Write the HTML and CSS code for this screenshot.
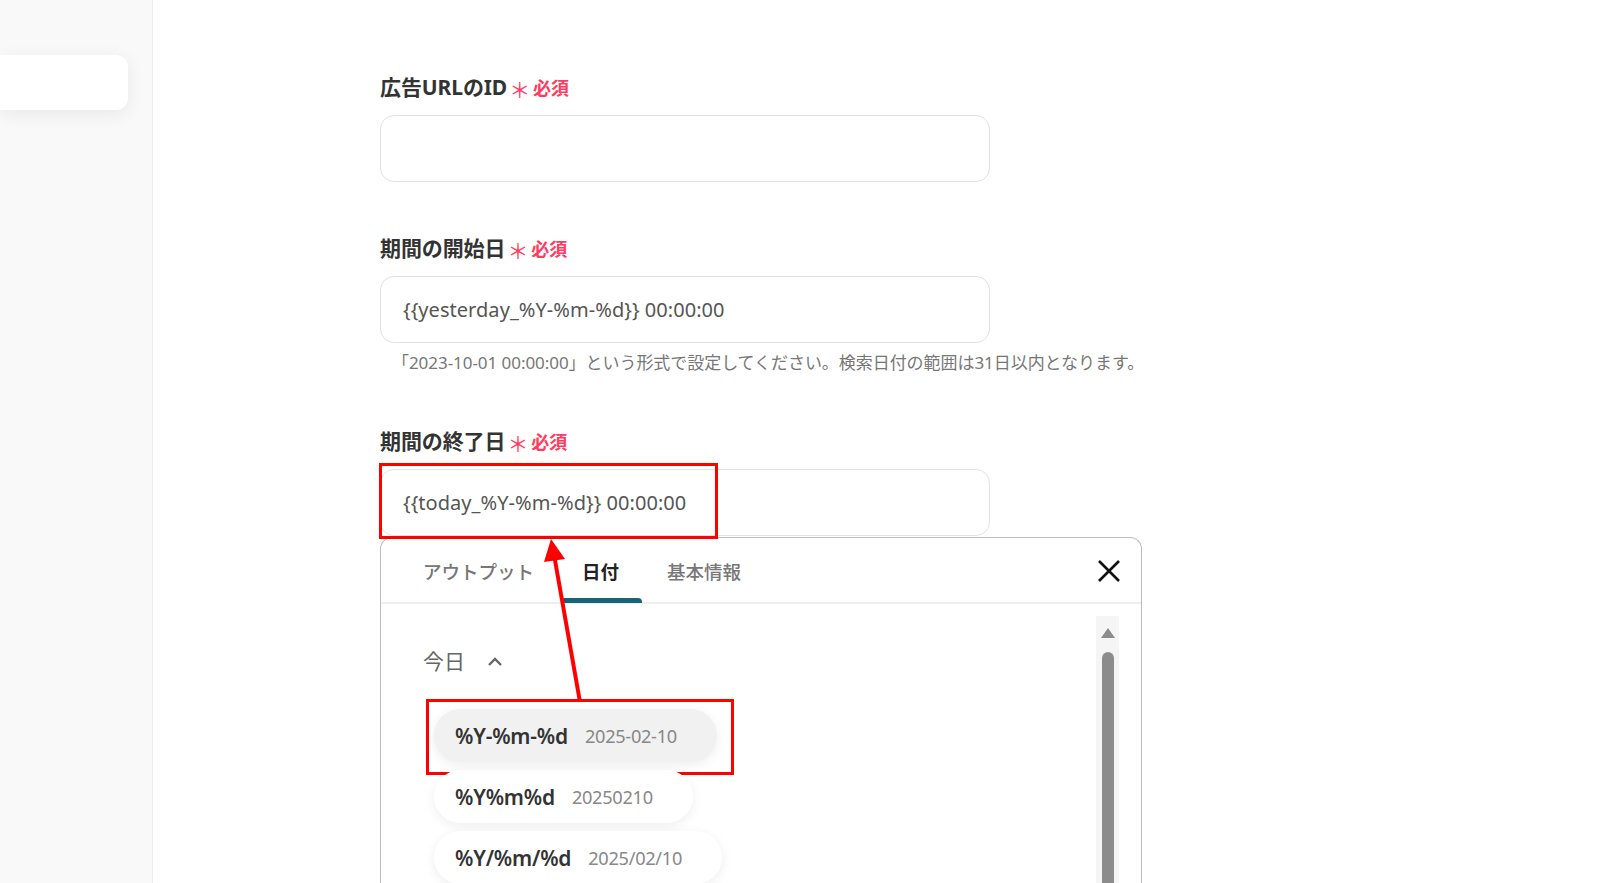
FILE: index.html
```html
<!DOCTYPE html>
<html lang="ja">
<head>
    <meta charset="UTF-8">
    <meta name="viewport" content="width=device-width, initial-scale=1.0">
    <title>期間の設定</title>
    <link rel="stylesheet" href="styles.css">
</head>
<body>
    <div class="app">
        <aside class="sidebar">
            <div class="side-card"></div>
        </aside>

        <main class="main">
            <div class="form">
                <div class="field">
                    <div class="label">広告URLのID<span class="req"><span class="star">＊</span>必須</span></div>
                    <div class="input"></div>
                </div>

                <div class="field">
                    <div class="label">期間の開始日<span class="req"><span class="star">＊</span>必須</span></div>
                    <div class="input">{{yesterday_%Y-%m-%d}} 00:00:00</div>
                    <p class="hint">「2023-10-01 00:00:00」という形式で設定してください。検索日付の範囲は31日以内となります。</p>
                </div>

                <div class="field">
                    <div class="label">期間の終了日<span class="req"><span class="star">＊</span>必須</span></div>
                    <div class="input-wrap">
                        <div class="input">{{today_%Y-%m-%d}} 00:00:00</div>
                        <div class="mark mark-input"></div>
                    </div>

                    <div class="picker">
                        <div class="picker-head">
                            <div class="tabs">
                                <div class="tab">アウトプット</div>
                                <div class="tab active">日付</div>
                                <div class="tab">基本情報</div>
                            </div>
                            <svg class="close" width="24" height="24" viewBox="0 0 24 24">
                                <path d="M2 2 L22 22 M22 2 L2 22" stroke="#111" stroke-width="2.6" fill="none"/>
                            </svg>
                        </div>
                        <div class="picker-body">
                            <div class="list">
                                <div class="group">
                                    今日
                                    <svg width="16" height="12" viewBox="0 0 16 12">
                                        <path d="M2 10 L8 4 L14 10" stroke="#666" stroke-width="2.4" fill="none"/>
                                    </svg>
                                </div>
                                <div class="item selected">
                                    <span class="fmt">%Y-%m-%d</span><span class="val">2025-02-10</span>
                                    <div class="mark mark-item"></div>
                                </div>
                                <div class="item">
                                    <span class="fmt">%Y%m%d</span><span class="val">20250210</span>
                                </div>
                                <div class="item">
                                    <span class="fmt">%Y/%m/%d</span><span class="val">2025/02/10</span>
                                </div>
                            </div>
                            <div class="scroll">
                                <div class="scroll-up"></div>
                                <div class="scroll-thumb"></div>
                            </div>
                        </div>
                    </div>
                </div>
            </div>
        </main>

        <!-- annotation arrow -->
        <svg class="arrow" width="1600" height="883" viewBox="0 0 1600 883">
            <line x1="580" y1="702" x2="554.6" y2="558" stroke="#ff0000" stroke-width="4"/>
            <polygon points="551,539 565,559 544,562" fill="#ff0000"/>
        </svg>
    </div>
</body>
</html>
```

FILE: styles.css
```css
html,
body {
    margin: 0;
    height: 883px;
    overflow: hidden;
    background-color: #ffffff;
    font-family: "Noto Sans", "Noto Sans CJK JP", sans-serif;
    color: #333;
}

.app {
    position: relative;
    display: flex;
    height: 883px;
}

.sidebar {
    width: 153px;
    flex-shrink: 0;
    background-color: #f9f9f9;
    border-right: 1px solid #efefef;
    padding-top: 55px;
    box-sizing: border-box;
}

.side-card {
    width: 128px;
    height: 55px;
    background: #fff;
    border-radius: 0 12px 12px 0;
    box-shadow: 0 4px 18px rgba(0, 0, 0, 0.07);
}

.main {
    flex: 1;
    padding: 73px 0 0 227px;
}

.form {
    width: 762px;
}

.field {
    margin-bottom: 52px;
}

.label {
    height: 28px;
    font-size: 21px;
    line-height: 28px;
    font-weight: 700;
    color: #333;
    margin-bottom: 14px;
    letter-spacing: -0.1px;
}

.req {
    color: #ff3b62;
    font-size: 18px;
    line-height: 1;
    margin-left: 2px;
}

.star {
    font-size: 21px;
    line-height: 1;
    font-weight: 400;
    margin-right: 3px;
    position: relative;
    top: 3px;
}

.input {
    width: 610px;
    height: 67px;
    box-sizing: border-box;
    border: 1.5px solid #dfe2e6;
    border-radius: 14px;
    padding: 0 22px;
    display: flex;
    align-items: center;
    font-size: 20px;
    color: #555;
    letter-spacing: 0.05px;
}

.hint {
    margin: 8px 0 0 12px;
    font-size: 17px;
    line-height: 24px;
    color: #777;
    white-space: nowrap;
    letter-spacing: -0.05px;
}

.input-wrap {
    position: relative;
}

.mark {
    position: absolute;
    border: 3px solid #ff0000;
    box-sizing: border-box;
}

.mark-input {
    left: -1px;
    top: -6px;
    width: 339px;
    height: 76px;
}

.picker {
    margin-top: 1px;
    width: 762px;
    height: 400px;
    box-sizing: border-box;
    border: 1.5px solid #bcbcbc;
    border-bottom: none;
    border-radius: 12px 12px 0 0;
    background: #fff;
}

.picker-head {
    display: flex;
    justify-content: space-between;
    align-items: center;
    height: 64px;
    padding: 0 20px 0 22px;
    border-bottom: 2px solid #eeeeee;
}

.tabs {
    display: flex;
    gap: 8px;
    height: 64px;
}

.tab {
    position: relative;
    padding: 20px 20px 0;
    font-size: 18.5px;
    line-height: 28px;
    color: #777;
    font-weight: 500;
}

.tab.active {
    color: #222;
    font-weight: 700;
}

.tab.active::after {
    content: "";
    position: absolute;
    left: -1px;
    right: -3px;
    bottom: -1px;
    height: 5px;
    border-radius: 4px 4px 0 0;
    background-color: #156479;
}

.close {
    margin-top: 2px;
}

.picker-body {
    display: flex;
    justify-content: space-between;
}

.list {
    padding: 43px 0 0 53px;
}

.group {
    margin-left: -11px;
    font-size: 21px;
    line-height: 28px;
    color: #666;
    display: flex;
    align-items: center;
    gap: 22px;
    margin-bottom: 34px;
}

.item {
    position: relative;
    display: flex;
    align-items: center;
    width: fit-content;
    height: 53px;
    padding: 0 40px 0 21px;
    margin-bottom: 8px;
    border-radius: 27px;
    background: #fff;
    box-shadow: 0 3px 12px rgba(0, 0, 0, 0.07);
}

.item.selected {
    background: #f1f1f1;
}

.fmt {
    font-size: 21px;
    font-weight: 600;
    color: #333;
    letter-spacing: -0.2px;
}

.val {
    margin-left: 17px;
    font-size: 18.2px;
    color: #888;
    letter-spacing: -0.3px;
}

.mark-item {
    left: -8px;
    top: -10px;
    width: 308px;
    height: 76px;
}

.scroll {
    width: 23px;
    height: 300px;
    margin: 12px 22px 0 0;
    background-color: #f5f5f5;
    display: flex;
    flex-direction: column;
    align-items: center;
}

.scroll-up {
    margin-top: 12px;
    width: 0;
    height: 0;
    border-left: 7px solid transparent;
    border-right: 7px solid transparent;
    border-bottom: 10px solid #8c8c8c;
}

.scroll-thumb {
    margin-top: 14px;
    width: 12px;
    flex: 1;
    border-radius: 6px 6px 0 0;
    background-color: #8c8c8c;
}

.arrow {
    position: absolute;
    top: 0;
    left: 0;
    pointer-events: none;
}
```
